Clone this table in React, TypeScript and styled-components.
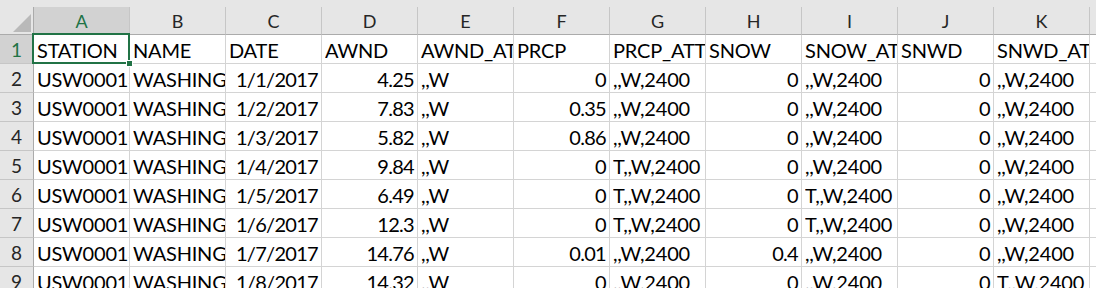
import React from "react";
import styled, { createGlobalStyle } from "styled-components";

const Global = createGlobalStyle`
  html, body { margin: 0; padding: 0; background: #ffffff; overflow: hidden; }
  #root { width: 1096px; height: 288px; overflow: hidden; }
`;

const COLS = ["A", "B", "C", "D", "E", "F", "G", "H", "I", "J", "K", "L"];

const Viewport = styled.div`
  width: 1096px;
  height: 288px;
  overflow: hidden;
`;

const Sheet = styled.div`
  display: grid;
  grid-template-columns: 34px repeat(12, 96px);
  grid-auto-rows: 29px;
  grid-template-rows: 7px 28px;
  width: max-content;
  font-family: Lato, "Open Sans", sans-serif;
  background: #ffffff;
`;

const TopStrip = styled.div`
  grid-column: 1 / -1;
  background: #e6e6e6;
`;

const Corner = styled.div`
  position: relative;
  background: #e6e6e6;
  border-right: 1px solid #ababab;
  border-bottom: 1px solid #ababab;
  box-sizing: border-box;
  overflow: hidden;
`;

const CornerTriangle = styled.div`
  position: absolute;
  right: 2px;
  bottom: 2px;
  width: 0;
  height: 0;
  border-left: 18px solid transparent;
  border-bottom: 18px solid #b9b9b9;
`;

const ColHeader = styled.div<{ $active?: boolean }>`
  display: flex;
  align-items: center;
  justify-content: center;
  box-sizing: border-box;
  background: ${(p) => (p.$active ? "#d2d2d2" : "#e6e6e6")};
  color: ${(p) => (p.$active ? "#217346" : "#262626")};
  border-right: 1px solid #c6c6c6;
  border-bottom: 1px solid ${(p) => (p.$active ? "#217346" : "#ababab")};
  font-size: 18px;
  padding-top: 1px;
`;

const RowHeader = styled.div<{ $active?: boolean }>`
  display: flex;
  align-items: center;
  justify-content: center;
  box-sizing: border-box;
  background: ${(p) => (p.$active ? "#d2d2d2" : "#e6e6e6")};
  color: ${(p) => (p.$active ? "#217346" : "#262626")};
  border-right: 1px solid ${(p) => (p.$active ? "#217346" : "#ababab")};
  border-bottom: 1px solid #c6c6c6;
  font-size: 19px;
  padding-top: 1px;
`;

const Cell = styled.div<{ $right?: boolean }>`
  position: relative;
  box-sizing: border-box;
  border-right: 1px solid #d4d4d4;
  border-bottom: 1px solid #d4d4d4;
  font-size: 20px;
  line-height: 28px;
  padding: 1px 3px 0 3px;
  white-space: nowrap;
  overflow: ${(p) => (p.$right ? "hidden" : "visible")};
  text-align: ${(p) => (p.$right ? "right" : "left")};
  letter-spacing: ${(p) => (p.$right ? "-0.7px" : "-0.2px")};
  color: #000000;
`;

const CellText = styled.span`
  display: block;
  overflow: hidden;
  margin-right: -3px;
`;

const Selection = styled.div`
  position: absolute;
  left: -2px;
  top: -2px;
  width: 98px;
  height: 31px;
  box-sizing: border-box;
  border: 2px solid #217346;
  pointer-events: none;
  z-index: 2;
`;

const Handle = styled.div`
  position: absolute;
  right: -5px;
  bottom: -5px;
  width: 7px;
  height: 7px;
  box-sizing: border-box;
  background: #217346;
  border: 1px solid #ffffff;
`;

type Row = string[];

const header: Row = [
  "STATION",
  "NAME",
  "DATE",
  "AWND",
  "AWND_ATTRIBUTES",
  "PRCP",
  "PRCP_ATTRIBUTES",
  "SNOW",
  "SNOW_ATTRIBUTES",
  "SNWD",
  "SNWD_ATTRIBUTES",
];

const data: Row[] = [
  ["1/1/2017", "4.25", ",,W", "0", ",,W,2400", "0", ",,W,2400", "0", ",,W,2400"],
  ["1/2/2017", "7.83", ",,W", "0.35", ",,W,2400", "0", ",,W,2400", "0", ",,W,2400"],
  ["1/3/2017", "5.82", ",,W", "0.86", ",,W,2400", "0", ",,W,2400", "0", ",,W,2400"],
  ["1/4/2017", "9.84", ",,W", "0", "T,,W,2400", "0", ",,W,2400", "0", ",,W,2400"],
  ["1/5/2017", "6.49", ",,W", "0", "T,,W,2400", "0", "T,,W,2400", "0", ",,W,2400"],
  ["1/6/2017", "12.3", ",,W", "0", "T,,W,2400", "0", "T,,W,2400", "0", ",,W,2400"],
  ["1/7/2017", "14.76", ",,W", "0.01", ",,W,2400", "0.4", ",,W,2400", "0", ",,W,2400"],
  ["1/8/2017", "14.32", ",,W", "0", ",,W,2400", "0", ",,W,2400", "0", "T,,W,2400"],
];

const numericCols = new Set([0, 1, 3, 5, 7]);

export default function App() {
  return (
    <>
      <Global />
      <Viewport>
        <Sheet>
          <TopStrip />
          <Corner>
            <CornerTriangle />
          </Corner>
          {COLS.map((c, i) => (
            <ColHeader key={c} $active={i === 0}>
              {c}
            </ColHeader>
          ))}

          <RowHeader $active>1</RowHeader>
          {header.map((h, i) => (
            <Cell key={h}>
              <CellText>{h}</CellText>
              {i === 0 && (
                <Selection>
                  <Handle />
                </Selection>
              )}
            </Cell>
          ))}
          <Cell />

          {data.map((r, ri) => (
            <React.Fragment key={ri}>
              <RowHeader>{ri + 2}</RowHeader>
              <Cell>
                <CellText>USW00013743</CellText>
              </Cell>
              <Cell>
                <CellText>WASHINGTON DULLES INTERNATIONAL AIRPORT, VA US</CellText>
              </Cell>
              {r.map((v, ci) => (
                <Cell key={ci} $right={numericCols.has(ci)}>
                  {numericCols.has(ci) ? v : <CellText>{v}</CellText>}
                </Cell>
              ))}
              <Cell />
            </React.Fragment>
          ))}
        </Sheet>
      </Viewport>
    </>
  );
}
